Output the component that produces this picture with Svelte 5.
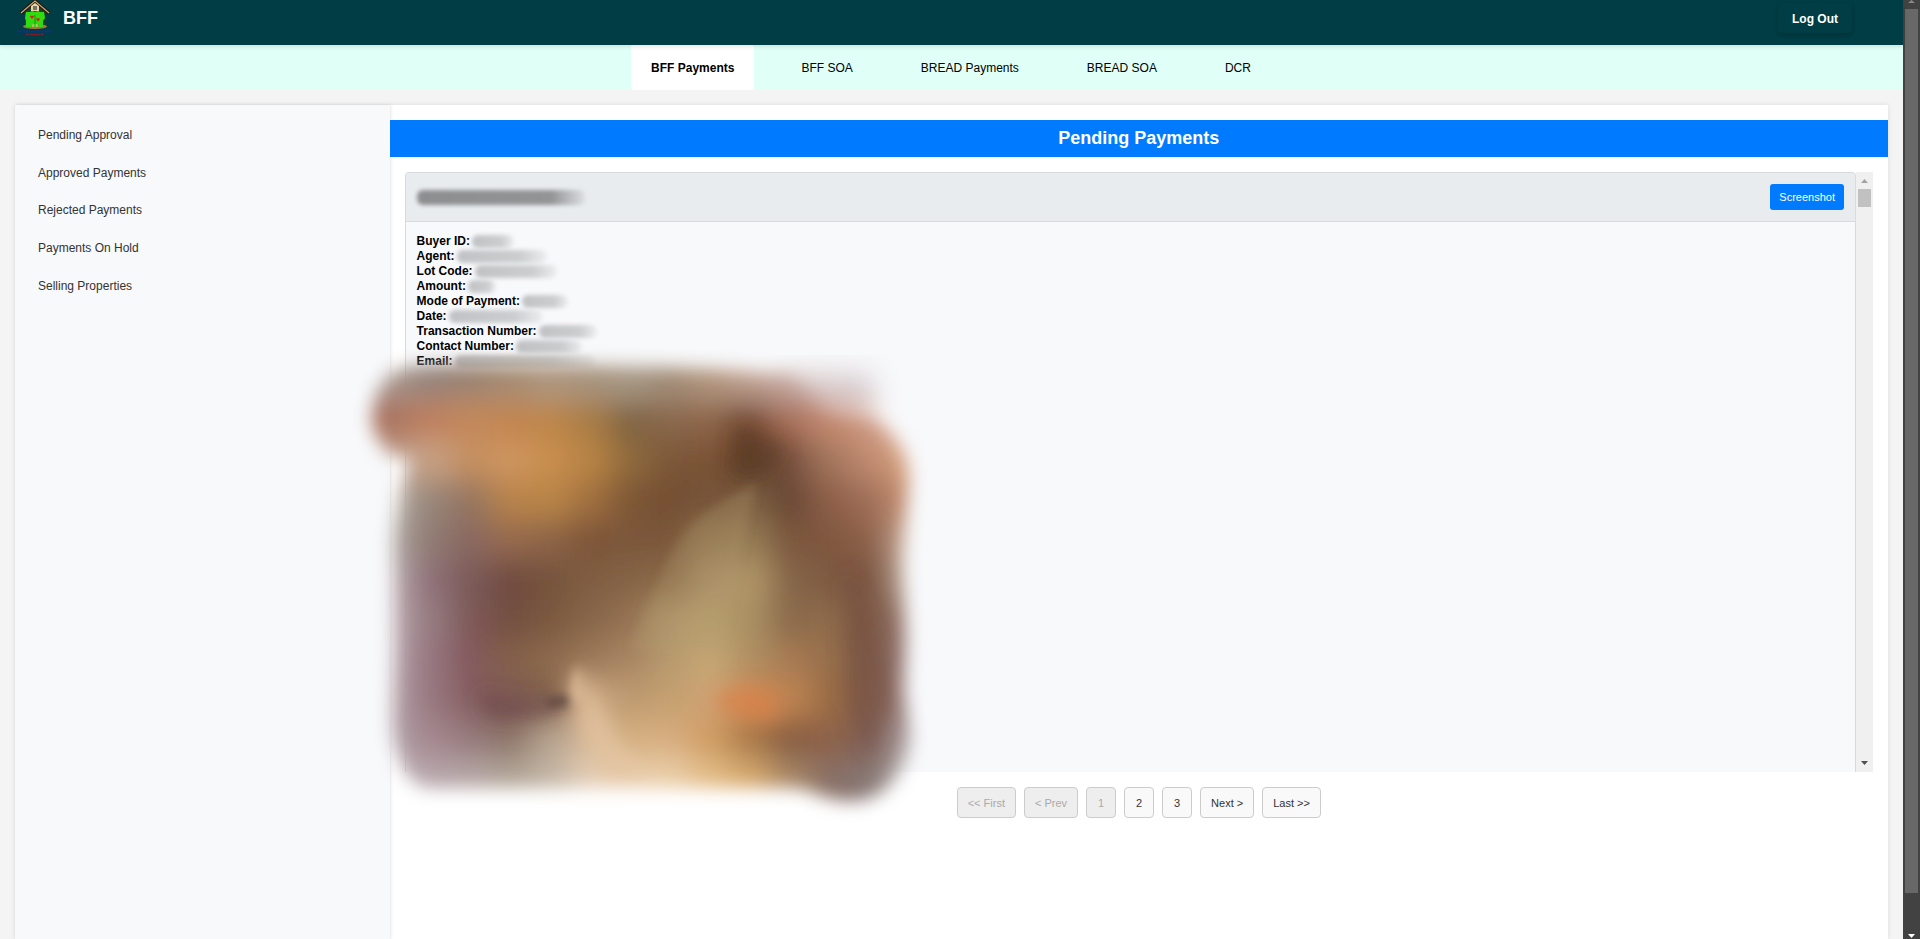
<script>
  const tabs = ['BFF Payments', 'BFF SOA', 'BREAD Payments', 'BREAD SOA', 'DCR'];
  const links = ['Pending Approval', 'Approved Payments', 'Rejected Payments', 'Payments On Hold', 'Selling Properties'];
  const fields = [
    { label: 'Buyer ID:', width: 42 },
    { label: 'Agent:', width: 90 },
    { label: 'Lot Code:', width: 82 },
    { label: 'Amount:', width: 28 },
    { label: 'Mode of Payment:', width: 46 },
    { label: 'Date:', width: 94 },
    { label: 'Transaction Number:', width: 58 },
    { label: 'Contact Number:', width: 66 },
    { label: 'Email:', width: 140 }
  ];
  const pages = [
    { text: '<< First', off: true },
    { text: '< Prev', off: true },
    { text: '1', off: true },
    { text: '2', off: false },
    { text: '3', off: false },
    { text: 'Next >', off: false },
    { text: 'Last >>', off: false }
  ];
  // Colour samples of the obscured photo, one per 40px cell
  const cells = [
    'a9978f 94847c 9a8473 a58c75 ad9781 a8947f a89a86 a38d78 b3977f c0a090 c5a8a0 c8b4b4 c9bdc2 e4e2e6',
    'a9705a bf7f5c c4885a c28550 bd8649 a87c45 7f6342 8a684c 8d6549 744a30 a87058 c58a70 cf9a82 e8c8b8',
    'c0a090 c8a285 c59060 cf9560 c98f4f b98445 8f6a3c 7c5738 7a5236 5f3d27 75503c a3745c bf8a70 d9a480',
    'b8b0a8 978579 94755f b88348 b98546 a0703f 7d5634 744e31 765338 7c5f42 674630 8d5f48 a06e58 c58f70',
    'b0a6a2 8f7a72 8a6860 956a50 8d6446 7d5538 7c563a 7c573a 8f7450 957b55 7a563e 80573f 8c604a c5a590',
    'b8a8ac 8f7078 7a5a58 6f4a3f 74523c 7f5d42 846444 8a6a4a a98e66 b29668 856548 7d5a42 7a5240 b8a090',
    'b8a6ae 957c80 7f5858 72503f 7a583f 876648 957252 b0956a b8a06e a98f63 8a6b4c 8f6c4c 7c5643 9a7a70',
    'b8a4ac 96757f 84585d 836048 8d6a4d 9b7858 a98664 b89a6e c6a774 b08f62 a87a52 97704c 805b48 947873',
    'b4a0a8 98777f 855e60 7d5855 80604c d0aa85 bd9a70 c5a070 d0a274 cf8a55 c08552 9a6c45 855f4b 957a78',
    'b0a0a8 a58890 957a7c 8d7568 b5a28e d5b898 d5b080 d8ad80 cf9c60 a87848 855a40 8d6248 806058 a89a9a',
    'c0b0b5 b8a8ad b8a8a8 b4a89a c4b6a6 e4cfb8 ebd2b2 ebd0aa e4be88 d8ac70 a88868 887068 877874 b8b0b0'
  ].map((row) => row.split(' '));
</script>

<div class="window">
  <div class="page">
    <header>
      <div class="brand">
        <svg class="logo" viewBox="0 0 36 38" role="img" aria-label="BFF logo">
          <ellipse cx="18" cy="27.500" rx="12" ry="2.600" fill="#a8783a" />
          <path d="M8 13 18 4l10 9v13H8z" fill="#20402c" />
          <path d="M9 13h4l2-1 3 1 3-1 2 1h4l1 6-2 3v6h-4l-1-3-1 3h-3l-1-3-2 3h-5v-6l-1-3z" fill="#2fdc10" />
          <path d="M4 14 18 2l14 12" fill="none" stroke="#241408" stroke-width="3.400" />
          <path d="M4 14 18 2l14 12" fill="none" stroke="#c8a878" stroke-width="1.300" />
          <path d="M14 12V7l4-3 4 3v5z" fill="#e8d8a8" />
          <rect x="16" y="7" width="4" height="4" fill="#77716a" />
          <path d="m15 20-2-2.400 1-1.200 1 .8 1-.8 1 1.200zM21 22.500l-2-2.400 1-1.200 1 .8 1-.8 1 1.200z" fill="#e01818" />
          <path d="M16 25v3m4-3v3" stroke="#e8c880" stroke-width="1.200" />
          <path d="M18 16v9" stroke="#1a8a14" />
          <path d="M1 32.500h34" stroke="#15308c" stroke-width="1.800" stroke-dasharray="2 .6" />
          <path d="M9 35.500h18" stroke="#8c1c20" stroke-width="1.600" stroke-dasharray="2 .5" />
        </svg>
        <span class="name">BFF</span>
      </div>
      <button class="logout">Log Out</button>
    </header>

    <nav class="tabs">
      {#each tabs as tab, i}
        <a href="#top" class:active={i === 0}>{tab}</a>
      {/each}
    </nav>

    <div class="panel">
      <aside>
        <ul>
          {#each links as link}
            <li><a href="#top">{link}</a></li>
          {/each}
        </ul>
      </aside>

      <main>
        <h1>Pending Payments</h1>
        <div class="listing">
          <div class="scroller">
            <article>
              <div class="card-head">
                <span class="smudge title"></span>
                <button class="shot">Screenshot</button>
              </div>
              <dl>
                {#each fields as field}
                  <div>
                    <dt>{field.label}</dt>
                    <dd class="smudge" style="width: {field.width}px"></dd>
                  </div>
                {/each}
              </dl>
            </article>
            <div class="bar">
              <svg viewBox="0 0 17 17"><path d="M5 11h7L8.500 7z" fill="#a3a3a3" /></svg>
              <div class="thumb"></div>
              <svg viewBox="0 0 17 17"><path d="M5 6h7l-3.500 4z" fill="#505050" /></svg>
            </div>
          </div>

          <svg class="photo" viewBox="350 340 590 490" aria-hidden="true">
            <defs>
              <filter id="soft" x="-20%" y="-20%" width="140%" height="140%"><feGaussianBlur stdDeviation="15" /></filter>
              <filter id="edge" x="-20%" y="-20%" width="140%" height="140%"><feGaussianBlur stdDeviation="9" /></filter>
              <filter id="fade" x="-40%" y="-40%" width="180%" height="180%"><feGaussianBlur stdDeviation="14" /></filter>
              <filter id="wide" x="-40%" y="-40%" width="180%" height="180%"><feGaussianBlur stdDeviation="9" /></filter>
              <filter id="fine" x="-40%" y="-40%" width="180%" height="180%"><feGaussianBlur stdDeviation="5" /></filter>
              <mask id="shape" maskUnits="userSpaceOnUse" x="350" y="340" width="590" height="490">
                <path d="M780 374H876V420H780Z" fill="#fff" opacity=".7" filter="url(#fade)" />
                <g filter="url(#edge)">
                  <path d="M400 369C440 362 500 366 560 365C660 367 740 368 790 376C810 390 820 408 850 412C890 416 909 445 909 480L903 560L906 640L904 690L910 735C907 782 880 801 850 801C825 800 812 790 795 788H430C408 786 396 765 392 725L394 640L393 540C397 500 402 475 412 460L390 456C374 440 370 425 373 408C376 388 388 373 400 369Z" fill="#fff" />
                </g>
              </mask>
            </defs>
            <g mask="url(#shape)">
              <rect x="350" y="340" width="590" height="490" fill="#a08678" />
              <g filter="url(#soft)">
                {#each cells as row, j}
                  {#each row as color, i}
                    <rect
                      x={i === 0 ? 330 : 370 + i * 40}
                      y={j === 0 ? 320 : 360 + j * 40}
                      width={i === 0 ? 81 : i === 13 ? 100 : 41}
                      height={j === 0 ? 81 : j === 10 ? 100 : 41}
                      fill="#{color}"
                    />
                  {/each}
                {/each}
              </g>
              <g filter="url(#wide)">
                <path d="M736 425C755 435 785 440 785 450L765 475L730 480Z" fill="#563620" opacity=".5" />
                <path d="M845 565C862 600 885 650 890 700L870 760L845 700Z" fill="#6f4a3e" opacity=".4" />
                <path d="M718 694L745 688L778 694L778 718L750 718L718 708Z" fill="#d8824a" opacity=".7" />
                <path d="M578 665C574 680 576 690 578 705C582 740 596 765 612 785L650 785C610 740 600 700 578 665Z" fill="#e4c4a0" opacity=".7" />
                <path d="M480 690C510 704 545 704 570 696L566 706C540 718 510 722 485 715Z" fill="#6c4648" opacity=".6" />
              </g>
              <g filter="url(#fine)">
                <path d="M757 484C720 500 690 520 672 552C655 590 640 620 630 650L720 650C732 600 738 560 757 484Z" fill="#b59a6a" opacity=".28" />
                <path d="M578 665C572 675 571 690 573 705L582 700Z" fill="#e0bc98" opacity=".8" />
                <path d="M545 699L571 694L571 706L548 708Z" fill="#55403a" opacity=".7" />
              </g>
            </g>
          </svg>
        </div>

        <div class="pager">
          {#each pages as page}
            <button disabled={page.off}>{page.text}</button>
          {/each}
        </div>
      </main>
    </div>
  </div>

  <div class="bar dark">
    <svg viewBox="0 0 17 9"><path d="M5 3h7L8.500 0z" fill="#888" /></svg>
    <div class="thumb"></div>
    <svg viewBox="0 0 17 9"><path d="M5 4h7L8.500 8z" fill="#fff" /></svg>
  </div>
</div>

<style>
  .window {
    display: grid;
    grid-template-columns: minmax(0, 1fr) 17px;
    height: 100vh;
    overflow: hidden;
    font: 12px/15px "Liberation Sans", Arial, sans-serif;
    color: #000;
    background: #f4f4f4;
  }
  .page { display: flex; flex-direction: column; min-height: 0; }
  button { font-family: inherit; cursor: pointer; }
  button:disabled { cursor: default; }
  a { color: inherit; text-decoration: none; }

  header {
    display: flex;
    justify-content: space-between;
    align-items: flex-start;
    box-sizing: border-box;
    height: 45px;
    padding: 0 51px 0 17px;
    background: #003d44;
    box-shadow: 0 2px 4px rgba(0, 0, 0, .1);
    position: relative;
  }
  .brand { display: flex; align-items: center; gap: 10px; height: 36px; }
  .logo { width: 36px; height: 38px; }
  .name { color: #fff; font-size: 18px; font-weight: bold; }
  .logout {
    margin-top: 3px;
    padding: 1px 14px 0;
    height: 30px;
    border: 0;
    border-radius: 4px;
    background: #003d44;
    box-shadow: 0 2px 4px rgba(0, 0, 0, .2);
    color: #fff;
    font-size: 12px;
    font-weight: bold;
  }

  .tabs {
    display: flex;
    justify-content: center;
    gap: 26px;
    height: 45px;
    background: #e0fff7;
  }
  .tabs a { box-sizing: border-box; height: 45px; padding: 1px 21px 0; line-height: 45px; border-radius: 3px; }
  .tabs .active { padding: 1px 20px 0; background: #fff; font-weight: bold; }

  .panel {
    flex: 1;
    display: grid;
    grid-template-columns: 20% minmax(0, 1fr);
    margin: 15px 15px 0;
    background: #fff;
    box-shadow: 0 0 5px rgba(0, 0, 0, .1);
  }
  aside { background: #f8f9fb; box-shadow: 1px 0 3px rgba(0, 0, 0, .1); }
  ul {
    display: grid;
    grid-auto-rows: 1fr;
    height: 188px;
    margin: 0;
    padding: 12px 23px;
    list-style: none;
    color: #333;
  }
  li { display: flex; align-items: center; }

  main { padding-top: 15px; }
  h1 {
    margin: 0;
    background: #007bff;
    color: #fff;
    font-size: 18px;
    line-height: 37px;
    text-align: center;
  }
  .listing { position: relative; margin: 15px 15px 0; }
  .scroller {
    display: grid;
    grid-template-columns: minmax(0, 1fr) 17px;
    height: 600px;
    overflow: hidden;
  }
  article {
    border: 1px solid #d8dadd;
    border-bottom: 0;
    border-radius: 4px 4px 0 0;
    background: #f8f9fb;
    overflow: hidden;
  }
  .card-head {
    display: flex;
    justify-content: space-between;
    align-items: center;
    height: 48px;
    padding: 0 11px;
    border-bottom: 1px solid #d8dadd;
    background: #e9ecef;
  }
  .shot {
    height: 26px;
    padding: 0 9px;
    border: 0;
    border-radius: 3px;
    background: #007bff;
    color: #fff;
    font-size: 11px;
  }
  dl { margin: 0; padding: 12px 11px; }
  dl div { display: flex; align-items: center; gap: 2px; height: 15px; }
  dt { font-weight: bold; }
  .smudge {
    height: 13px;
    margin: 0;
    border-radius: 6px;
    background: linear-gradient(90deg, #c0c2c4, #cbcdcf 70%, #eceef0);
    filter: blur(2px);
  }
  .smudge.title {
    width: 168px;
    height: 15px;
    background: linear-gradient(90deg, #8c8e90, #929496 80%, #dcdfe2);
  }

  .bar { display: flex; flex-direction: column; align-items: center; background: #f0f0f0; }
  .bar svg { width: 17px; flex: none; }
  .bar svg:last-child { margin-top: auto; }
  .thumb { width: 13px; height: 18px; background: #c1c1c1; }
  .dark { background: #424242; }
  .dark .thumb { height: 884px; max-height: 95%; background: #686868; }

  .photo {
    position: absolute;
    left: -55px;
    top: 168px;
    width: 590px;
    height: 490px;
    pointer-events: none;
  }

  .pager { display: flex; justify-content: center; gap: 8px; margin-top: 15px; }
  .pager button {
    min-width: 30px;
    height: 31px;
    padding: 0 10px;
    border: 1px solid #ccc;
    border-radius: 4px;
    background: #f9f9f9;
    color: #333;
    font-size: 11px;
  }
  .pager button:disabled { background: #eee; color: #aaa; }
</style>
